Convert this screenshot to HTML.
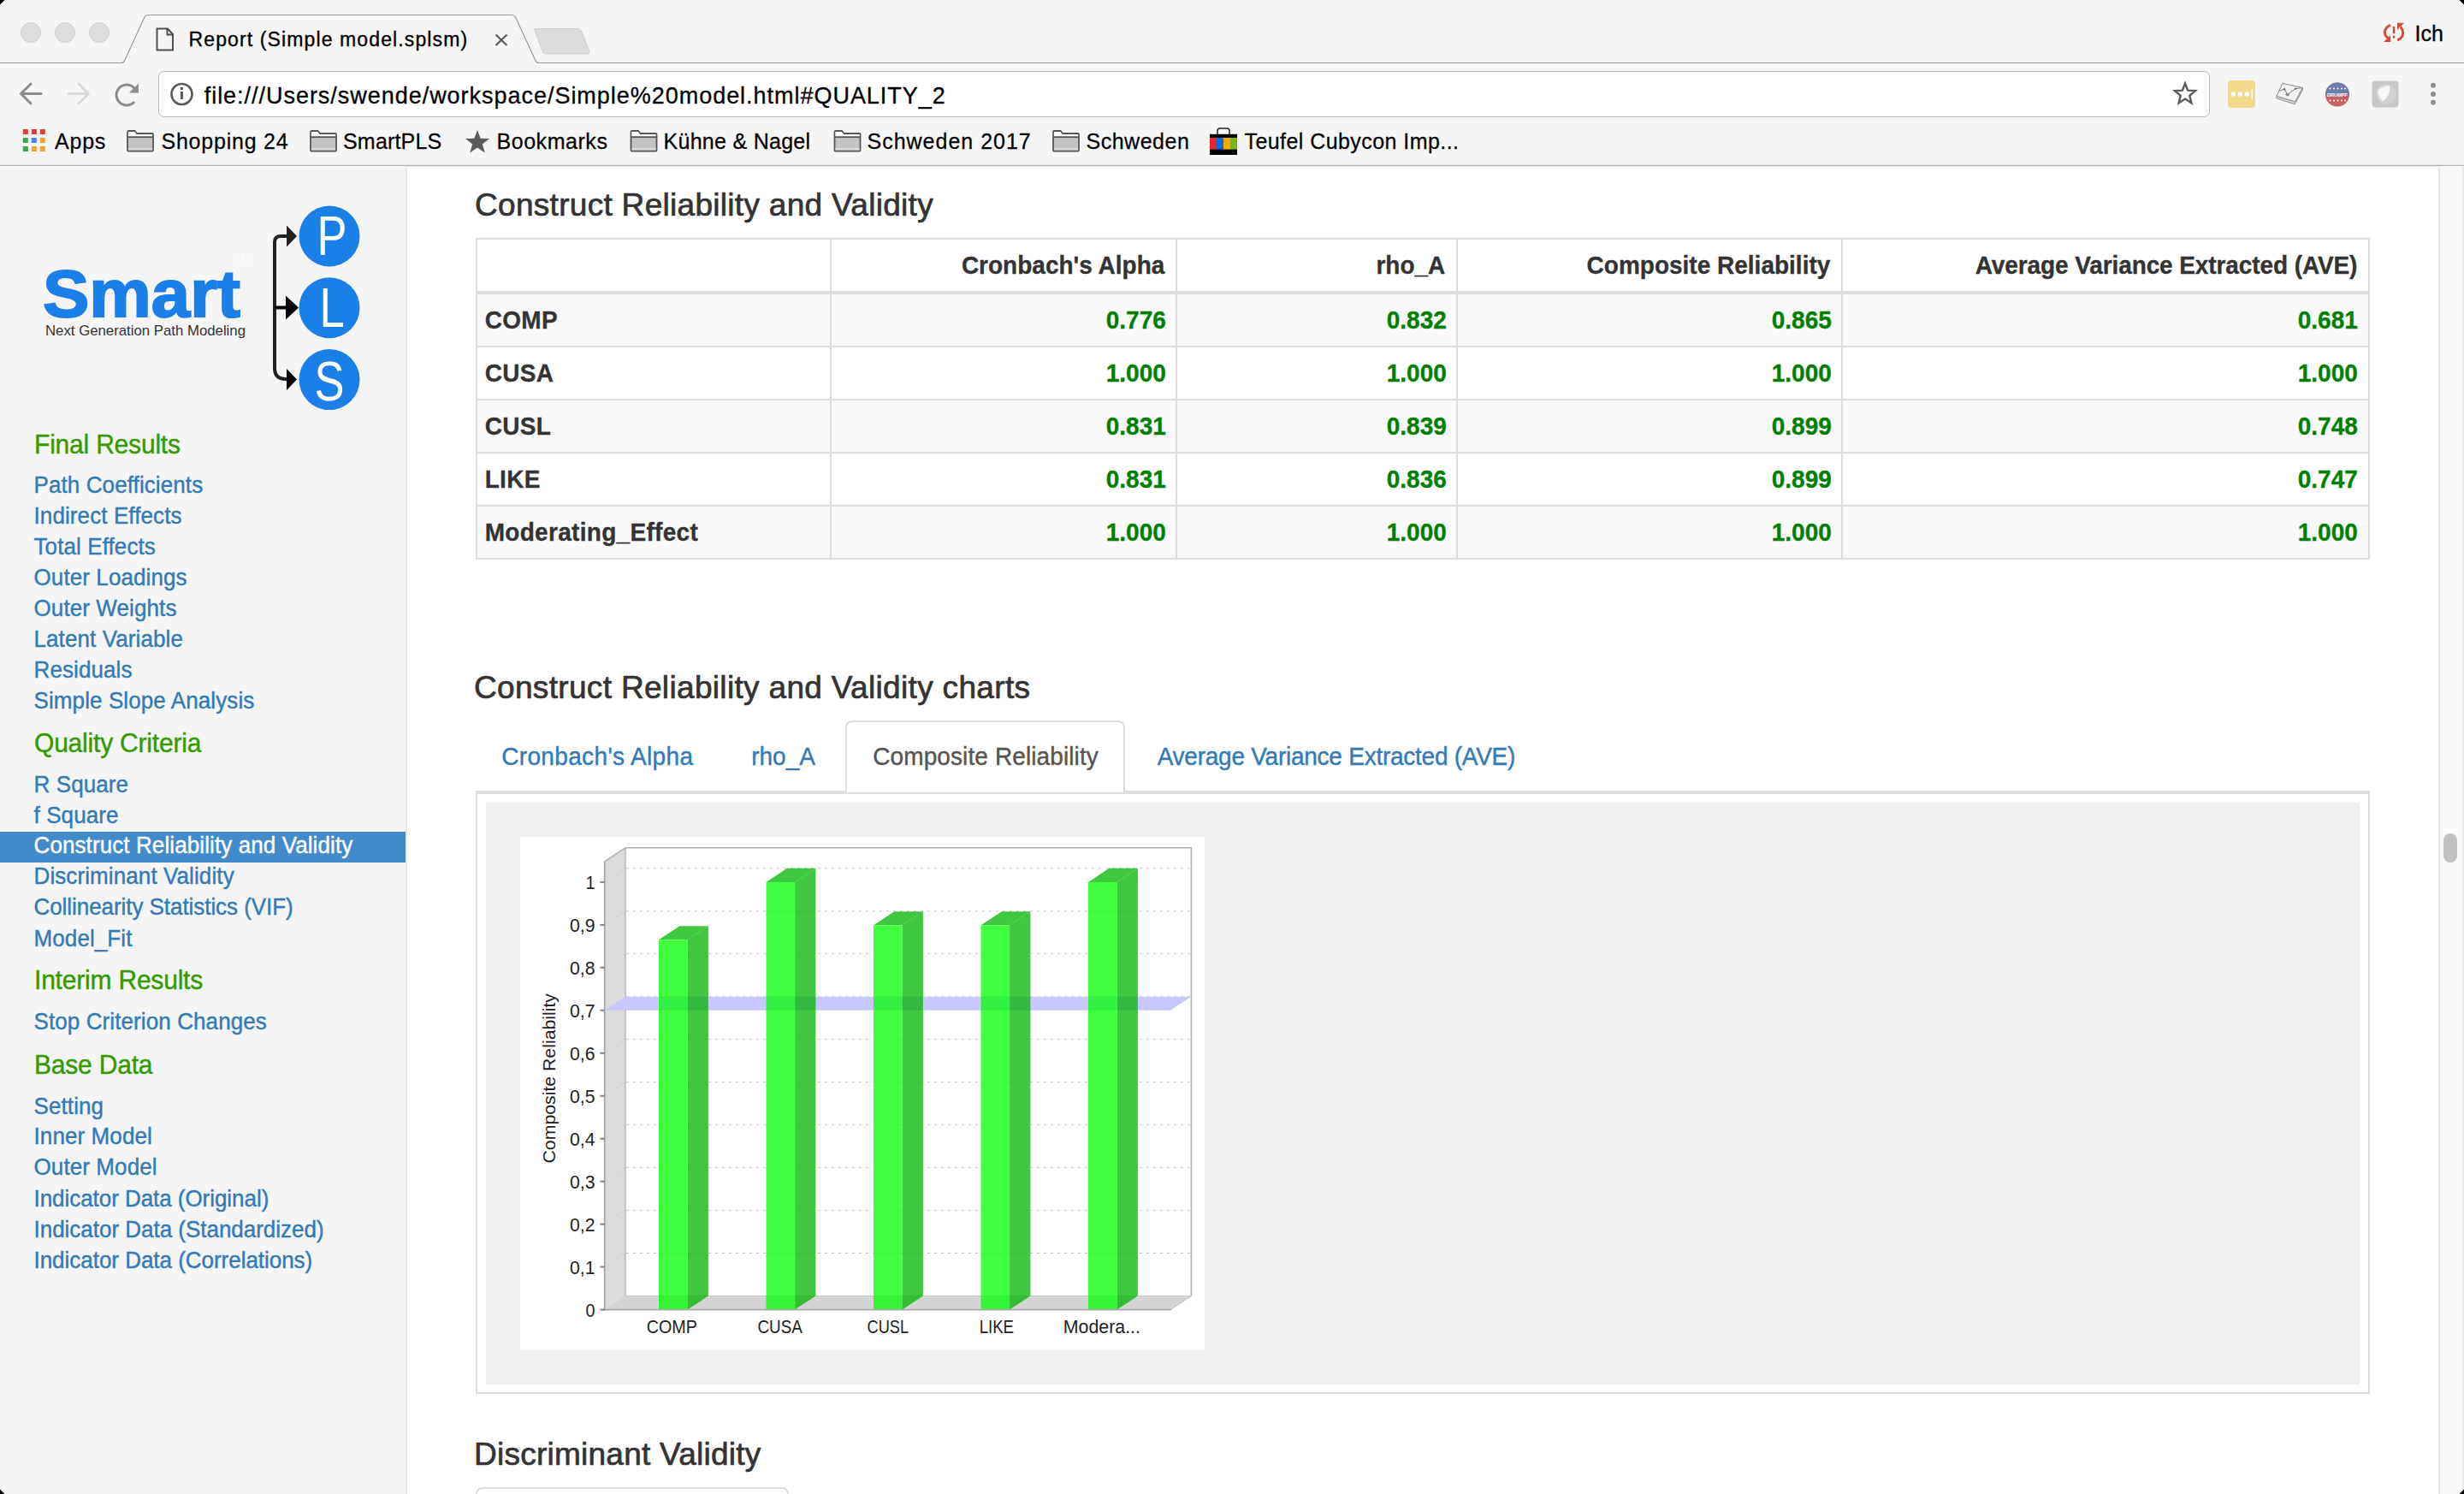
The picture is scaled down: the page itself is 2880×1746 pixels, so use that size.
<!DOCTYPE html>
<html><head><meta charset="utf-8"><title>Report</title>
<style>
html,body{margin:0;padding:0;width:2880px;height:1746px;overflow:hidden;background:#fff;position:relative;font-family:"Liberation Sans", sans-serif}
.t{position:absolute;white-space:nowrap;font-family:"Liberation Sans", sans-serif}
</style></head><body>
<div style="position:absolute;left:0;top:0;width:2880px;height:194px;background:#f5f5f5"></div>
<svg style="position:absolute;left:0;top:0" width="2880" height="200">
<path d="M0 73.5 H142 Q144.5 73.5 145.5 71 L169 20 Q170.5 17.5 173.5 17.5 H598 Q601 17.5 602.5 20 L626 71 Q627 73.5 630 73.5 H2880" fill="none" stroke="#9a9a9a" stroke-width="1.2"/>
<path d="M625 35.5 Q623 33.5 626 33.5 H675 Q678 33.5 679.5 36 L689 60 Q690 63 687 63 H638 Q635 63 634 60 Z" fill="#dcdcdc" stroke="#cfcfcf" stroke-width="1"/>
<circle cx="36" cy="38" r="11.5" fill="#dedede" stroke="#cfcfcf" stroke-width="1"/>
<circle cx="76" cy="38" r="11.5" fill="#dedede" stroke="#cfcfcf" stroke-width="1"/>
<circle cx="116" cy="38" r="11.5" fill="#dedede" stroke="#cfcfcf" stroke-width="1"/>
<!-- file icon -->
<path d="M183.5 33.5 H196 L202 40 V58.5 H183.5 Z M195.5 33.5 V40.5 H202" fill="none" stroke="#505050" stroke-width="2"/>
<!-- close x -->
<path d="M579.5 40.5 L592.5 53 M592.5 40.5 L579.5 53" stroke="#5a5a5a" stroke-width="2.2"/>
<!-- bookmarks bar bottom line -->
<line x1="0" y1="193.5" x2="2880" y2="193.5" stroke="#b4b4b4" stroke-width="1.5"/>
<!-- url bar -->
<rect x="185.5" y="83.5" width="2397" height="53" rx="6" ry="6" fill="#fff" stroke="#b9b9b9" stroke-width="1"/>
<!-- back -->
<path d="M48 109.5 H26 M36 98 L24.5 109.5 L36 121" fill="none" stroke="#8c8c8c" stroke-width="3" stroke-linecap="round" stroke-linejoin="round"/>
<!-- forward -->
<path d="M80 109.5 H103 M92 98 L103.5 109.5 L92 121" fill="none" stroke="#d9d9d9" stroke-width="3" stroke-linecap="round" stroke-linejoin="round"/>
<!-- reload -->
<path d="M158.5 105 A12 12 0 1 0 157 119" fill="none" stroke="#8c8c8c" stroke-width="3"/>
<path d="M162 97.5 V108.5 H151 Z" fill="#8c8c8c"/>
<!-- info icon -->
<circle cx="212.5" cy="110" r="12" fill="none" stroke="#5a5a5a" stroke-width="2.6"/>
<rect x="211" y="107" width="3" height="9" fill="#5a5a5a"/>
<rect x="211" y="102" width="3" height="3" fill="#5a5a5a"/>
<!-- star -->
<path d="M2554 97.5 L2557.2 105.6 L2566 106.1 L2559.3 111.8 L2561.4 120.3 L2554 115.6 L2546.6 120.3 L2548.7 111.8 L2542 106.1 L2550.8 105.6 Z" fill="none" stroke="#5a5a5a" stroke-width="2.4" stroke-linejoin="miter"/>
<!-- lastpass -->
<rect x="2604" y="94" width="32" height="32" rx="4" fill="#f3d98a"/>
<circle cx="2610.5" cy="110" r="2.7" fill="#fff"/><circle cx="2618.3" cy="110" r="2.7" fill="#fff"/><circle cx="2626.4" cy="110" r="2.7" fill="#fff"/>
<rect x="2631.5" y="104.5" width="1.5" height="11" fill="#fff"/>
<!-- map icon -->
<path d="M2661 112.5 L2667.8 97.5 L2691.5 102.5 L2682.5 119 Z" fill="#f2f2f2" stroke="#8a8a8a" stroke-width="1"/>
<path d="M2661 112.5 L2660.6 114.8 L2682.3 121.8 L2691.6 105 L2691.5 102.5 L2682.5 119 Z" fill="#d9d9d9" stroke="#8a8a8a" stroke-width="0.9"/>
<path d="M2664.5 106 L2670.1 104.2 L2673.7 110.4 L2683.1 103.6 L2689.5 102.8" fill="none" stroke="#7a7a7a" stroke-width="1"/>
<circle cx="2670.1" cy="104.2" r="1.2" fill="#6a6a6a"/><circle cx="2683.1" cy="103.6" r="1.2" fill="#6a6a6a"/>
<ellipse cx="2673.7" cy="110.6" rx="2.2" ry="1.8" fill="#8a8a8a"/>
<!-- drumpf -->
<circle cx="2732" cy="110.5" r="14" fill="#c46262"/>
<path d="M2718 110.5 A14 14 0 0 1 2746 110.5 Z" fill="#6c7ea9"/>
<text x="2732" y="112.8" font-family="Liberation Sans" font-size="6" font-weight="700" fill="#fff" text-anchor="middle" textLength="24" lengthAdjust="spacingAndGlyphs">DRUMPF</text>
<g fill="#fff"><circle cx="2723.5" cy="103.5" r="1"/><circle cx="2728" cy="103.5" r="1"/><circle cx="2732.5" cy="103.5" r="1"/><circle cx="2737" cy="103.5" r="1"/><circle cx="2741" cy="103.5" r="1"/>
<circle cx="2723.5" cy="117.5" r="1"/><circle cx="2728" cy="117.5" r="1"/><circle cx="2732.5" cy="117.5" r="1"/><circle cx="2737" cy="117.5" r="1"/><circle cx="2741" cy="117.5" r="1"/></g>
<!-- gray ext -->
<rect x="2772.5" y="94.5" width="31" height="31" rx="4" fill="#c8c8c8"/>
<circle cx="2789" cy="110" r="11.5" fill="#d3d3d3"/>
<path d="M2779.5 105 Q2786 99.5 2793 100.3 Q2795 111 2785 118.5 Q2778.5 112 2779.5 105 Z" fill="#f6f6f6"/>
<!-- menu dots -->
<circle cx="2844" cy="99.7" r="3" fill="#8e8e8e"/><circle cx="2844" cy="110" r="3" fill="#8e8e8e"/><circle cx="2844" cy="119.7" r="3" fill="#8e8e8e"/>
<!-- red sync icon -->
<path d="M2794 29.3 Q2787.3 32 2787.4 38.2 Q2787.6 42.5 2792.5 45" fill="none" stroke="#d54b3a" stroke-width="3"/>
<path d="M2786 49 L2794.2 41.2 V49 Z" fill="#d54b3a"/>
<path d="M2802.2 47 Q2809 44.2 2808.6 38.2 Q2808.4 34 2805.8 31.5" fill="none" stroke="#d54b3a" stroke-width="3"/>
<path d="M2810 26.8 L2802 35 V26.8 Z" fill="#d54b3a"/>
<rect x="2796.8" y="31" width="2.4" height="8.2" fill="#d54b3a"/><rect x="2796.8" y="41.7" width="2.4" height="3" fill="#d54b3a"/>
<!-- apps grid -->
<rect x="26.8" y="151.0" width="6" height="6" fill="#e53935"/><rect x="36.8" y="151.0" width="6" height="6" fill="#e53935"/><rect x="46.8" y="151.0" width="6" height="6" fill="#e53935"/><rect x="26.8" y="161.0" width="6" height="6" fill="#34a853"/><rect x="36.8" y="161.0" width="6" height="6" fill="#4285f4"/><rect x="46.8" y="161.0" width="6" height="6" fill="#f2a22b"/><rect x="26.8" y="171.0" width="6" height="6" fill="#34a853"/><rect x="36.8" y="171.0" width="6" height="6" fill="#f2a22b"/><rect x="46.8" y="171.0" width="6" height="6" fill="#f2a22b"/>
<path d="M149 154.5 Q149 153 150.5 153 H157.5 L160 156 H178 Q179 156 179 157.5 V175.5 Q179 176.5 178 176.5 H150 Q149 176.5 149 175.5 Z" fill="#c4c4c4" stroke="#555" stroke-width="1.8"/><path d="M149.9 154 H157.2 L159.6 157 H178.1 V159.6 H149.9 Z" fill="#fbfbfb"/><path d="M149 160.2 H179" stroke="#555" stroke-width="1.8"/><rect x="149.9" y="173" width="28.2" height="2.6" fill="#d8d8d8"/>
<path d="M363 154.5 Q363 153 364.5 153 H371.5 L374 156 H392 Q393 156 393 157.5 V175.5 Q393 176.5 392 176.5 H364 Q363 176.5 363 175.5 Z" fill="#c4c4c4" stroke="#555" stroke-width="1.8"/><path d="M363.9 154 H371.2 L373.6 157 H392.1 V159.6 H363.9 Z" fill="#fbfbfb"/><path d="M363 160.2 H393" stroke="#555" stroke-width="1.8"/><rect x="363.9" y="173" width="28.2" height="2.6" fill="#d8d8d8"/>
<path d="M737.5 154.5 Q737.5 153 739.0 153 H746.0 L748.5 156 H766.5 Q767.5 156 767.5 157.5 V175.5 Q767.5 176.5 766.5 176.5 H738.5 Q737.5 176.5 737.5 175.5 Z" fill="#c4c4c4" stroke="#555" stroke-width="1.8"/><path d="M738.4 154 H745.7 L748.1 157 H766.6 V159.6 H738.4 Z" fill="#fbfbfb"/><path d="M737.5 160.2 H767.5" stroke="#555" stroke-width="1.8"/><rect x="738.4" y="173" width="28.2" height="2.6" fill="#d8d8d8"/>
<path d="M975.5 154.5 Q975.5 153 977.0 153 H984.0 L986.5 156 H1004.5 Q1005.5 156 1005.5 157.5 V175.5 Q1005.5 176.5 1004.5 176.5 H976.5 Q975.5 176.5 975.5 175.5 Z" fill="#c4c4c4" stroke="#555" stroke-width="1.8"/><path d="M976.4 154 H983.7 L986.1 157 H1004.6 V159.6 H976.4 Z" fill="#fbfbfb"/><path d="M975.5 160.2 H1005.5" stroke="#555" stroke-width="1.8"/><rect x="976.4" y="173" width="28.2" height="2.6" fill="#d8d8d8"/>
<path d="M1231 154.5 Q1231 153 1232.5 153 H1239.5 L1242 156 H1260 Q1261 156 1261 157.5 V175.5 Q1261 176.5 1260 176.5 H1232 Q1231 176.5 1231 175.5 Z" fill="#c4c4c4" stroke="#555" stroke-width="1.8"/><path d="M1231.9 154 H1239.2 L1241.6 157 H1260.1 V159.6 H1231.9 Z" fill="#fbfbfb"/><path d="M1231 160.2 H1261" stroke="#555" stroke-width="1.8"/><rect x="1231.9" y="173" width="28.2" height="2.6" fill="#d8d8d8"/>
<path d="M558 152 L561.6 161.7 L572 162 L563.8 168.4 L566.8 178.5 L558 172.5 L549.2 178.5 L552.2 168.4 L544 162 L554.4 161.7 Z" fill="#5a5a5a"/>
<rect x="1414" y="156.8" width="32" height="24.2" fill="#000"/><rect x="1414" y="161" width="8" height="13.6" fill="#e3262d"/><rect x="1422" y="161" width="8" height="13.6" fill="#0a68d8"/><rect x="1430" y="161" width="8" height="13.6" fill="#f6aa00"/><rect x="1438" y="161" width="8" height="13.6" fill="#78b41c"/><path d="M1423 157 V153 Q1423 150 1426 150 H1434 Q1437 150 1437 153 V157" fill="none" stroke="#222" stroke-width="1.5"/>
</svg>
<div class="t " style="left:220.5px;top:34.73px;font-size:23px;line-height:23px;color:#000;font-weight:400;letter-spacing:1.12px;-webkit-text-stroke:0.35px #000;">Report (Simple model.splsm)</div>
<div class="t " style="left:238.7px;top:98.54px;font-size:27px;line-height:27px;color:#000;font-weight:400;letter-spacing:0.97px;transform:scaleY(1.05);transform-origin:0 22.86px;-webkit-text-stroke:0.3px #000;">file:///Users/swende/workspace/Simple%20model.html#QUALITY_2</div>
<div class="t " style="left:64.0px;top:153.04px;font-size:25px;line-height:25px;color:#000;font-weight:400;letter-spacing:0.795px;transform:scaleY(1.03);transform-origin:0 21.16px;-webkit-text-stroke:0.25px #000;">Apps</div>
<div class="t " style="left:188.5px;top:153.04px;font-size:25px;line-height:25px;color:#000;font-weight:400;letter-spacing:0.771px;transform:scaleY(1.03);transform-origin:0 21.16px;-webkit-text-stroke:0.25px #000;">Shopping 24</div>
<div class="t " style="left:401.0px;top:153.04px;font-size:25px;line-height:25px;color:#000;font-weight:400;letter-spacing:0.19px;transform:scaleY(1.03);transform-origin:0 21.16px;-webkit-text-stroke:0.25px #000;">SmartPLS</div>
<div class="t " style="left:580.5px;top:153.04px;font-size:25px;line-height:25px;color:#000;font-weight:400;letter-spacing:0.544px;transform:scaleY(1.03);transform-origin:0 21.16px;-webkit-text-stroke:0.25px #000;">Bookmarks</div>
<div class="t " style="left:775.5px;top:153.04px;font-size:25px;line-height:25px;color:#000;font-weight:400;letter-spacing:0.285px;transform:scaleY(1.03);transform-origin:0 21.16px;-webkit-text-stroke:0.25px #000;">Kühne &amp; Nagel</div>
<div class="t " style="left:1013.5px;top:153.04px;font-size:25px;line-height:25px;color:#000;font-weight:400;letter-spacing:0.996px;transform:scaleY(1.03);transform-origin:0 21.16px;-webkit-text-stroke:0.25px #000;">Schweden 2017</div>
<div class="t " style="left:1269.5px;top:153.04px;font-size:25px;line-height:25px;color:#000;font-weight:400;letter-spacing:0.51px;transform:scaleY(1.03);transform-origin:0 21.16px;-webkit-text-stroke:0.25px #000;">Schweden</div>
<div class="t " style="left:1454.5px;top:153.04px;font-size:25px;line-height:25px;color:#000;font-weight:400;letter-spacing:0.435px;transform:scaleY(1.03);transform-origin:0 21.16px;-webkit-text-stroke:0.25px #000;">Teufel Cubycon Imp...</div>
<div class="t " style="left:2822.5px;top:26.59px;font-size:25px;line-height:25px;color:#000;font-weight:400;letter-spacing:0px;-webkit-text-stroke:0.35px #000;">Ich</div>
<div style="position:absolute;left:0;top:194px;width:474px;height:1552px;background:#f5f5f5;border-right:2px solid #e9e9e9"></div>
<svg style="position:absolute;left:0;top:194px" width="474" height="300">
<text x="50" y="176" font-family="Liberation Sans" font-weight="700" font-size="78" fill="#1b7fe8" stroke="#1b7fe8" stroke-width="2" textLength="231" lengthAdjust="spacingAndGlyphs">Smart</text>
<text x="53" y="198" font-family="Liberation Sans" font-size="17" fill="#333" textLength="234" lengthAdjust="spacingAndGlyphs">Next Generation Path Modeling</text>
<text x="273" y="116" font-family="Liberation Sans" font-size="14" fill="#fbfbfb">TM</text>
<path d="M336 82 H328 Q321 82 321 89 V236 Q321 249 334 249 H336" fill="none" stroke="#222" stroke-width="4"/>
<path d="M321 165.5 H336" stroke="#000" stroke-width="4"/>
<path d="M335 69.5 L347 82 L335 94.5 Z" fill="#222"/>
<path d="M334 151.5 L349 165.5 L334 179.5 Z" fill="#000"/>
<path d="M335 237 L347 249.5 L335 262 Z" fill="#000"/>
<circle cx="385" cy="82" r="35.5" fill="#1b7fe8"/>
<circle cx="385" cy="165.7" r="35.5" fill="#1b7fe8"/>
<circle cx="385" cy="249.6" r="35.5" fill="#1b7fe8"/>
<text transform="translate(388 104) scale(0.82 1)" font-family="Liberation Sans" font-size="64" fill="#fff" text-anchor="middle">P</text>
<text transform="translate(388 188) scale(0.82 1)" font-family="Liberation Sans" font-size="64" fill="#fff" text-anchor="middle">L</text>
<text transform="translate(385 273.5) scale(0.82 1)" font-family="Liberation Sans" font-size="64" fill="#fff" text-anchor="middle">S</text>
</svg>
<div style="position:absolute;left:0;top:972px;width:474px;height:36px;background:#428bca"></div>
<div class="t " style="left:40.0px;top:504.61px;font-size:30px;line-height:30px;color:#339a00;font-weight:400;letter-spacing:-0.2px;transform:scaleY(1.05);transform-origin:0 25.39px;-webkit-text-stroke:0.4px #339a00;">Final Results</div>
<div class="t " style="left:39.5px;top:553.79px;font-size:26px;line-height:26px;color:#337ab7;font-weight:400;letter-spacing:0.1px;transform:scaleY(1.05);transform-origin:0 22.01px;-webkit-text-stroke:0.4px #337ab7;">Path Coefficients</div>
<div class="t " style="left:39.5px;top:589.99px;font-size:26px;line-height:26px;color:#337ab7;font-weight:400;letter-spacing:0.1px;transform:scaleY(1.05);transform-origin:0 22.01px;-webkit-text-stroke:0.4px #337ab7;">Indirect Effects</div>
<div class="t " style="left:39.5px;top:625.89px;font-size:26px;line-height:26px;color:#337ab7;font-weight:400;letter-spacing:0.1px;transform:scaleY(1.05);transform-origin:0 22.01px;-webkit-text-stroke:0.4px #337ab7;">Total Effects</div>
<div class="t " style="left:39.5px;top:661.89px;font-size:26px;line-height:26px;color:#337ab7;font-weight:400;letter-spacing:0.1px;transform:scaleY(1.05);transform-origin:0 22.01px;-webkit-text-stroke:0.4px #337ab7;">Outer Loadings</div>
<div class="t " style="left:39.5px;top:697.59px;font-size:26px;line-height:26px;color:#337ab7;font-weight:400;letter-spacing:0.1px;transform:scaleY(1.05);transform-origin:0 22.01px;-webkit-text-stroke:0.4px #337ab7;">Outer Weights</div>
<div class="t " style="left:39.5px;top:733.79px;font-size:26px;line-height:26px;color:#337ab7;font-weight:400;letter-spacing:0.1px;transform:scaleY(1.05);transform-origin:0 22.01px;-webkit-text-stroke:0.4px #337ab7;">Latent Variable</div>
<div class="t " style="left:39.5px;top:769.99px;font-size:26px;line-height:26px;color:#337ab7;font-weight:400;letter-spacing:0.1px;transform:scaleY(1.05);transform-origin:0 22.01px;-webkit-text-stroke:0.4px #337ab7;">Residuals</div>
<div class="t " style="left:39.5px;top:805.69px;font-size:26px;line-height:26px;color:#337ab7;font-weight:400;letter-spacing:0.1px;transform:scaleY(1.05);transform-origin:0 22.01px;-webkit-text-stroke:0.4px #337ab7;">Simple Slope Analysis</div>
<div class="t " style="left:40.0px;top:853.71px;font-size:30px;line-height:30px;color:#339a00;font-weight:400;letter-spacing:-0.2px;transform:scaleY(1.05);transform-origin:0 25.39px;-webkit-text-stroke:0.4px #339a00;">Quality Criteria</div>
<div class="t " style="left:39.5px;top:903.79px;font-size:26px;line-height:26px;color:#337ab7;font-weight:400;letter-spacing:0.1px;transform:scaleY(1.05);transform-origin:0 22.01px;-webkit-text-stroke:0.4px #337ab7;">R Square</div>
<div class="t " style="left:39.5px;top:939.79px;font-size:26px;line-height:26px;color:#337ab7;font-weight:400;letter-spacing:0.1px;transform:scaleY(1.05);transform-origin:0 22.01px;-webkit-text-stroke:0.4px #337ab7;">f Square</div>
<div class="t " style="left:39.5px;top:975.49px;font-size:26px;line-height:26px;color:#fff;font-weight:400;letter-spacing:0.1px;transform:scaleY(1.05);transform-origin:0 22.01px;-webkit-text-stroke:0.4px #fff;">Construct Reliability and Validity</div>
<div class="t " style="left:39.5px;top:1011.39px;font-size:26px;line-height:26px;color:#337ab7;font-weight:400;letter-spacing:0.1px;transform:scaleY(1.05);transform-origin:0 22.01px;-webkit-text-stroke:0.4px #337ab7;">Discriminant Validity</div>
<div class="t " style="left:39.5px;top:1047.39px;font-size:26px;line-height:26px;color:#337ab7;font-weight:400;letter-spacing:-0.06px;transform:scaleY(1.05);transform-origin:0 22.01px;-webkit-text-stroke:0.4px #337ab7;">Collinearity Statistics (VIF)</div>
<div class="t " style="left:39.5px;top:1083.59px;font-size:26px;line-height:26px;color:#337ab7;font-weight:400;letter-spacing:0.1px;transform:scaleY(1.05);transform-origin:0 22.01px;-webkit-text-stroke:0.4px #337ab7;">Model_Fit</div>
<div class="t " style="left:40.0px;top:1131.40px;font-size:30px;line-height:30px;color:#339a00;font-weight:400;letter-spacing:-0.2px;transform:scaleY(1.05);transform-origin:0 25.39px;-webkit-text-stroke:0.4px #339a00;">Interim Results</div>
<div class="t " style="left:39.5px;top:1181.19px;font-size:26px;line-height:26px;color:#337ab7;font-weight:400;letter-spacing:0.1px;transform:scaleY(1.05);transform-origin:0 22.01px;-webkit-text-stroke:0.4px #337ab7;">Stop Criterion Changes</div>
<div class="t " style="left:40.0px;top:1229.70px;font-size:30px;line-height:30px;color:#339a00;font-weight:400;letter-spacing:-0.2px;transform:scaleY(1.05);transform-origin:0 25.39px;-webkit-text-stroke:0.4px #339a00;">Base Data</div>
<div class="t " style="left:39.5px;top:1279.59px;font-size:26px;line-height:26px;color:#337ab7;font-weight:400;letter-spacing:0.1px;transform:scaleY(1.05);transform-origin:0 22.01px;-webkit-text-stroke:0.4px #337ab7;">Setting</div>
<div class="t " style="left:39.5px;top:1315.49px;font-size:26px;line-height:26px;color:#337ab7;font-weight:400;letter-spacing:0.1px;transform:scaleY(1.05);transform-origin:0 22.01px;-webkit-text-stroke:0.4px #337ab7;">Inner Model</div>
<div class="t " style="left:39.5px;top:1351.49px;font-size:26px;line-height:26px;color:#337ab7;font-weight:400;letter-spacing:0.1px;transform:scaleY(1.05);transform-origin:0 22.01px;-webkit-text-stroke:0.4px #337ab7;">Outer Model</div>
<div class="t " style="left:39.5px;top:1387.89px;font-size:26px;line-height:26px;color:#337ab7;font-weight:400;letter-spacing:-0.05px;transform:scaleY(1.05);transform-origin:0 22.01px;-webkit-text-stroke:0.4px #337ab7;">Indicator Data (Original)</div>
<div class="t " style="left:39.5px;top:1423.59px;font-size:26px;line-height:26px;color:#337ab7;font-weight:400;letter-spacing:-0.02px;transform:scaleY(1.05);transform-origin:0 22.01px;-webkit-text-stroke:0.4px #337ab7;">Indicator Data (Standardized)</div>
<div class="t " style="left:39.5px;top:1459.59px;font-size:26px;line-height:26px;color:#337ab7;font-weight:400;letter-spacing:-0.03px;transform:scaleY(1.05);transform-origin:0 22.01px;-webkit-text-stroke:0.4px #337ab7;">Indicator Data (Correlations)</div>
<div style="position:absolute;left:2850px;top:194px;width:30px;height:1552px;background:#fafafa;border-left:2px solid #e8e8e8;box-sizing:border-box"></div>
<div style="position:absolute;left:2878px;top:194px;width:2px;height:1552px;background:#ececec"></div><div style="position:absolute;left:2856px;top:974px;width:16px;height:34px;border-radius:8px;background:#c1c1c1"></div>
<div class="t " style="left:555.0px;top:220.98px;font-size:37px;line-height:37px;color:#333;font-weight:400;letter-spacing:0.3px;-webkit-text-stroke:0.7px #333;">Construct Reliability and Validity</div>
<svg style="position:absolute;left:0;top:0" width="2880" height="700"><rect x="557" y="340" width="2211" height="64" fill="#f9f9f9"/><rect x="557" y="466" width="2211" height="62" fill="#f9f9f9"/><rect x="557" y="590" width="2211" height="62" fill="#f9f9f9"/><rect x="556" y="278" width="2214" height="2" fill="#dddddd"/><rect x="556" y="340" width="2214" height="4" fill="#dddddd"/><rect x="556" y="404" width="2214" height="2" fill="#dddddd"/><rect x="556" y="466" width="2214" height="2" fill="#dddddd"/><rect x="556" y="528" width="2214" height="2" fill="#dddddd"/><rect x="556" y="590" width="2214" height="2" fill="#dddddd"/><rect x="556" y="652" width="2214" height="2" fill="#dddddd"/><rect x="556" y="278" width="2" height="376" fill="#dddddd"/><rect x="970" y="278" width="2" height="376" fill="#dddddd"/><rect x="1374" y="278" width="2" height="376" fill="#dddddd"/><rect x="1702" y="278" width="2" height="376" fill="#dddddd"/><rect x="2152" y="278" width="2" height="376" fill="#dddddd"/><rect x="2768" y="278" width="2" height="376" fill="#dddddd"/></svg>
<div class="t" style="right:1518.7px;top:296.50px;font-size:28px;line-height:28px;color:#333;font-weight:700;letter-spacing:0px;text-align:right;transform:scaleY(1.05);transform-origin:0 23.70px;-webkit-text-stroke:0.3px #333;">Cronbach's Alpha</div>
<div class="t" style="right:1190.7px;top:296.50px;font-size:28px;line-height:28px;color:#333;font-weight:700;letter-spacing:0px;text-align:right;transform:scaleY(1.05);transform-origin:0 23.70px;-webkit-text-stroke:0.3px #333;">rho_A</div>
<div class="t" style="right:740.7px;top:296.50px;font-size:28px;line-height:28px;color:#333;font-weight:700;letter-spacing:0px;text-align:right;transform:scaleY(1.05);transform-origin:0 23.70px;-webkit-text-stroke:0.3px #333;">Composite Reliability</div>
<div class="t" style="right:124.7px;top:296.50px;font-size:28px;line-height:28px;color:#333;font-weight:700;letter-spacing:-0.1px;text-align:right;transform:scaleY(1.05);transform-origin:0 23.70px;-webkit-text-stroke:0.3px #333;">Average Variance Extracted (AVE)</div>
<div class="t " style="left:566.7px;top:360.60px;font-size:28px;line-height:28px;color:#333;font-weight:700;letter-spacing:0.3px;transform:scaleY(1.05);transform-origin:0 23.70px;-webkit-text-stroke:0.3px #333;">COMP</div>
<div class="t" style="right:1517.2px;top:360.60px;font-size:28px;line-height:28px;color:#008000;font-weight:700;letter-spacing:0px;text-align:right;transform:scaleY(1.05);transform-origin:0 23.70px;-webkit-text-stroke:0.3px #008000;">0.776</div>
<div class="t" style="right:1189.2px;top:360.60px;font-size:28px;line-height:28px;color:#008000;font-weight:700;letter-spacing:0px;text-align:right;transform:scaleY(1.05);transform-origin:0 23.70px;-webkit-text-stroke:0.3px #008000;">0.832</div>
<div class="t" style="right:739.2px;top:360.60px;font-size:28px;line-height:28px;color:#008000;font-weight:700;letter-spacing:0px;text-align:right;transform:scaleY(1.05);transform-origin:0 23.70px;-webkit-text-stroke:0.3px #008000;">0.865</div>
<div class="t" style="right:124.2px;top:360.60px;font-size:28px;line-height:28px;color:#008000;font-weight:700;letter-spacing:0px;text-align:right;transform:scaleY(1.05);transform-origin:0 23.70px;-webkit-text-stroke:0.3px #008000;">0.681</div>
<div class="t " style="left:566.7px;top:422.60px;font-size:28px;line-height:28px;color:#333;font-weight:700;letter-spacing:0.3px;transform:scaleY(1.05);transform-origin:0 23.70px;-webkit-text-stroke:0.3px #333;">CUSA</div>
<div class="t" style="right:1517.2px;top:422.60px;font-size:28px;line-height:28px;color:#008000;font-weight:700;letter-spacing:0px;text-align:right;transform:scaleY(1.05);transform-origin:0 23.70px;-webkit-text-stroke:0.3px #008000;">1.000</div>
<div class="t" style="right:1189.2px;top:422.60px;font-size:28px;line-height:28px;color:#008000;font-weight:700;letter-spacing:0px;text-align:right;transform:scaleY(1.05);transform-origin:0 23.70px;-webkit-text-stroke:0.3px #008000;">1.000</div>
<div class="t" style="right:739.2px;top:422.60px;font-size:28px;line-height:28px;color:#008000;font-weight:700;letter-spacing:0px;text-align:right;transform:scaleY(1.05);transform-origin:0 23.70px;-webkit-text-stroke:0.3px #008000;">1.000</div>
<div class="t" style="right:124.2px;top:422.60px;font-size:28px;line-height:28px;color:#008000;font-weight:700;letter-spacing:0px;text-align:right;transform:scaleY(1.05);transform-origin:0 23.70px;-webkit-text-stroke:0.3px #008000;">1.000</div>
<div class="t " style="left:566.7px;top:484.60px;font-size:28px;line-height:28px;color:#333;font-weight:700;letter-spacing:0.3px;transform:scaleY(1.05);transform-origin:0 23.70px;-webkit-text-stroke:0.3px #333;">CUSL</div>
<div class="t" style="right:1517.2px;top:484.60px;font-size:28px;line-height:28px;color:#008000;font-weight:700;letter-spacing:0px;text-align:right;transform:scaleY(1.05);transform-origin:0 23.70px;-webkit-text-stroke:0.3px #008000;">0.831</div>
<div class="t" style="right:1189.2px;top:484.60px;font-size:28px;line-height:28px;color:#008000;font-weight:700;letter-spacing:0px;text-align:right;transform:scaleY(1.05);transform-origin:0 23.70px;-webkit-text-stroke:0.3px #008000;">0.839</div>
<div class="t" style="right:739.2px;top:484.60px;font-size:28px;line-height:28px;color:#008000;font-weight:700;letter-spacing:0px;text-align:right;transform:scaleY(1.05);transform-origin:0 23.70px;-webkit-text-stroke:0.3px #008000;">0.899</div>
<div class="t" style="right:124.2px;top:484.60px;font-size:28px;line-height:28px;color:#008000;font-weight:700;letter-spacing:0px;text-align:right;transform:scaleY(1.05);transform-origin:0 23.70px;-webkit-text-stroke:0.3px #008000;">0.748</div>
<div class="t " style="left:566.7px;top:546.60px;font-size:28px;line-height:28px;color:#333;font-weight:700;letter-spacing:0.3px;transform:scaleY(1.05);transform-origin:0 23.70px;-webkit-text-stroke:0.3px #333;">LIKE</div>
<div class="t" style="right:1517.2px;top:546.60px;font-size:28px;line-height:28px;color:#008000;font-weight:700;letter-spacing:0px;text-align:right;transform:scaleY(1.05);transform-origin:0 23.70px;-webkit-text-stroke:0.3px #008000;">0.831</div>
<div class="t" style="right:1189.2px;top:546.60px;font-size:28px;line-height:28px;color:#008000;font-weight:700;letter-spacing:0px;text-align:right;transform:scaleY(1.05);transform-origin:0 23.70px;-webkit-text-stroke:0.3px #008000;">0.836</div>
<div class="t" style="right:739.2px;top:546.60px;font-size:28px;line-height:28px;color:#008000;font-weight:700;letter-spacing:0px;text-align:right;transform:scaleY(1.05);transform-origin:0 23.70px;-webkit-text-stroke:0.3px #008000;">0.899</div>
<div class="t" style="right:124.2px;top:546.60px;font-size:28px;line-height:28px;color:#008000;font-weight:700;letter-spacing:0px;text-align:right;transform:scaleY(1.05);transform-origin:0 23.70px;-webkit-text-stroke:0.3px #008000;">0.747</div>
<div class="t " style="left:566.7px;top:608.60px;font-size:28px;line-height:28px;color:#333;font-weight:700;letter-spacing:0.3px;transform:scaleY(1.05);transform-origin:0 23.70px;-webkit-text-stroke:0.3px #333;">Moderating_Effect</div>
<div class="t" style="right:1517.2px;top:608.60px;font-size:28px;line-height:28px;color:#008000;font-weight:700;letter-spacing:0px;text-align:right;transform:scaleY(1.05);transform-origin:0 23.70px;-webkit-text-stroke:0.3px #008000;">1.000</div>
<div class="t" style="right:1189.2px;top:608.60px;font-size:28px;line-height:28px;color:#008000;font-weight:700;letter-spacing:0px;text-align:right;transform:scaleY(1.05);transform-origin:0 23.70px;-webkit-text-stroke:0.3px #008000;">1.000</div>
<div class="t" style="right:739.2px;top:608.60px;font-size:28px;line-height:28px;color:#008000;font-weight:700;letter-spacing:0px;text-align:right;transform:scaleY(1.05);transform-origin:0 23.70px;-webkit-text-stroke:0.3px #008000;">1.000</div>
<div class="t" style="right:124.2px;top:608.60px;font-size:28px;line-height:28px;color:#008000;font-weight:700;letter-spacing:0px;text-align:right;transform:scaleY(1.05);transform-origin:0 23.70px;-webkit-text-stroke:0.3px #008000;">1.000</div>
<div class="t " style="left:554.0px;top:784.88px;font-size:37px;line-height:37px;color:#333;font-weight:400;letter-spacing:0.33px;-webkit-text-stroke:0.7px #333;">Construct Reliability and Validity charts</div>
<div style="position:absolute;left:988px;top:842px;width:327px;height:86px;background:#fff;border:2px solid #ddd;border-bottom:none;border-radius:8px 8px 0 0;box-sizing:border-box"></div>
<div style="position:absolute;left:556px;top:926px;width:2214px;height:703px;border:2px solid #ddd;box-sizing:border-box"></div>
<div style="position:absolute;left:556px;top:924px;width:2214px;height:2px;background:#ddd"></div>
<div style="position:absolute;left:990px;top:922px;width:323px;height:4px;background:#fff"></div>
<div class="t " style="left:586.2px;top:870.80px;font-size:28px;line-height:28px;color:#337ab7;font-weight:400;letter-spacing:0.35px;transform:scaleY(1.06);transform-origin:0 23.70px;-webkit-text-stroke:0.4px #337ab7;">Cronbach's Alpha</div>
<div class="t " style="left:878.2px;top:870.80px;font-size:28px;line-height:28px;color:#337ab7;font-weight:400;letter-spacing:0px;transform:scaleY(1.06);transform-origin:0 23.70px;-webkit-text-stroke:0.4px #337ab7;">rho_A</div>
<div class="t " style="left:1020.2px;top:870.80px;font-size:28px;line-height:28px;color:#555;font-weight:400;letter-spacing:0.11px;transform:scaleY(1.06);transform-origin:0 23.70px;-webkit-text-stroke:0.4px #555;">Composite Reliability</div>
<div class="t " style="left:1352.7px;top:870.80px;font-size:28px;line-height:28px;color:#337ab7;font-weight:400;letter-spacing:-0.25px;transform:scaleY(1.06);transform-origin:0 23.70px;-webkit-text-stroke:0.4px #337ab7;">Average Variance Extracted (AVE)</div>
<div style="position:absolute;left:568px;top:938px;width:2190px;height:680px;background:#efefef"></div>
<div style="position:absolute;left:608px;top:978px;width:800px;height:600px;background:#fff"></div>
<div class="t " style="left:554.0px;top:1680.68px;font-size:37px;line-height:37px;color:#333;font-weight:400;letter-spacing:0.25px;-webkit-text-stroke:0.7px #333;">Discriminant Validity</div>
<div style="position:absolute;left:556px;top:1738px;width:366px;height:20px;border:2px solid #ddd;border-radius:8px 8px 0 0;box-sizing:border-box"></div>
<svg style="position:absolute;left:0;top:0" width="2880" height="1746"><path d="M0 0 H5.5 L0 5.5 Z" fill="#000"/><path d="M2880 0 H2874.5 L2880 5.5 Z" fill="#000"/><path d="M0 1746 H5.5 L0 1740.5 Z" fill="#000"/><path d="M2880 1746 H2874.5 L2880 1740.5 Z" fill="#000"/></svg>
<svg style="position:absolute;left:0;top:0" width="2880" height="1746" viewBox="0 0 2880 1746"><polygon points="706.7,1006.8999999999999 731.0,990.8 731.0,1514.5 706.7,1530.6" fill="#dcdcdc"/><polygon points="706.7,1530.6 731.0,1514.5 1393.4,1514.5 1369.1000000000001,1530.6" fill="#d4d4d4"/><line x1="732.0" y1="1464.5" x2="1391.4" y2="1464.5" stroke="#c8c8c8" stroke-width="1" stroke-dasharray="3 5"/><line x1="706.7" y1="1480.6" x2="731.0" y2="1464.5" stroke="#cfcfcf" stroke-width="1" stroke-dasharray="4 4"/><line x1="732.0" y1="1414.6" x2="1391.4" y2="1414.6" stroke="#c8c8c8" stroke-width="1" stroke-dasharray="3 5"/><line x1="706.7" y1="1430.7" x2="731.0" y2="1414.6" stroke="#cfcfcf" stroke-width="1" stroke-dasharray="4 4"/><line x1="732.0" y1="1364.6" x2="1391.4" y2="1364.6" stroke="#c8c8c8" stroke-width="1" stroke-dasharray="3 5"/><line x1="706.7" y1="1380.7" x2="731.0" y2="1364.6" stroke="#cfcfcf" stroke-width="1" stroke-dasharray="4 4"/><line x1="732.0" y1="1314.6" x2="1391.4" y2="1314.6" stroke="#c8c8c8" stroke-width="1" stroke-dasharray="3 5"/><line x1="706.7" y1="1330.7" x2="731.0" y2="1314.6" stroke="#cfcfcf" stroke-width="1" stroke-dasharray="4 4"/><line x1="732.0" y1="1264.7" x2="1391.4" y2="1264.7" stroke="#c8c8c8" stroke-width="1" stroke-dasharray="3 5"/><line x1="706.7" y1="1280.8" x2="731.0" y2="1264.7" stroke="#cfcfcf" stroke-width="1" stroke-dasharray="4 4"/><line x1="732.0" y1="1214.7" x2="1391.4" y2="1214.7" stroke="#c8c8c8" stroke-width="1" stroke-dasharray="3 5"/><line x1="706.7" y1="1230.8" x2="731.0" y2="1214.7" stroke="#cfcfcf" stroke-width="1" stroke-dasharray="4 4"/><line x1="732.0" y1="1164.7" x2="1391.4" y2="1164.7" stroke="#c8c8c8" stroke-width="1" stroke-dasharray="3 5"/><line x1="706.7" y1="1180.8" x2="731.0" y2="1164.7" stroke="#cfcfcf" stroke-width="1" stroke-dasharray="4 4"/><line x1="732.0" y1="1114.7" x2="1391.4" y2="1114.7" stroke="#c8c8c8" stroke-width="1" stroke-dasharray="3 5"/><line x1="706.7" y1="1130.8" x2="731.0" y2="1114.7" stroke="#cfcfcf" stroke-width="1" stroke-dasharray="4 4"/><line x1="732.0" y1="1064.8" x2="1391.4" y2="1064.8" stroke="#c8c8c8" stroke-width="1" stroke-dasharray="3 5"/><line x1="706.7" y1="1080.9" x2="731.0" y2="1064.8" stroke="#cfcfcf" stroke-width="1" stroke-dasharray="4 4"/><line x1="732.0" y1="1014.8" x2="1391.4" y2="1014.8" stroke="#c8c8c8" stroke-width="1" stroke-dasharray="3 5"/><line x1="706.7" y1="1030.9" x2="731.0" y2="1014.8" stroke="#cfcfcf" stroke-width="1" stroke-dasharray="4 4"/><path d="M706.7 1006.8999999999999 L731.0 990.8 H1392.4 V1514.5" fill="none" stroke="#b0b0b0" stroke-width="1.6"/><line x1="731.0" y1="990.8" x2="731.0" y2="1514.5" stroke="#b4b4b4" stroke-width="1.4"/><line x1="731.0" y1="1514.5" x2="1392.4" y2="1514.5" stroke="#c8c8c8" stroke-width="1"/><line x1="1392.4" y1="1514.5" x2="1368.1000000000001" y2="1530.6" stroke="#c0c0c0" stroke-width="1"/><polygon points="706.7,1180.81 731.0,1164.71 1392.4,1164.71 1368.1000000000001,1180.81" fill="#c8c8ff"/><g fill-opacity="0.75"><polygon points="803.6,1098.3595 827.9,1082.2595000000001 827.9,1514.5 803.6,1530.6" fill="#00b400"/><polygon points="770.0,1098.3595 794.3,1082.2595000000001 827.9,1082.2595000000001 803.6,1098.3595" fill="#00b400"/><rect x="770.0" y="1098.3595" width="33.6" height="432.2404999999999" fill="#00ff00"/></g><g fill-opacity="0.75"><polygon points="929.1,1030.8999999999999 953.4,1014.8 953.4,1514.5 929.1,1530.6" fill="#00b400"/><polygon points="895.5,1030.8999999999999 919.8,1014.8 953.4,1014.8 929.1,1030.8999999999999" fill="#00b400"/><rect x="895.5" y="1030.8999999999999" width="33.6" height="499.70000000000005" fill="#00ff00"/></g><g fill-opacity="0.75"><polygon points="1054.6,1081.3697 1078.8999999999999,1065.2697 1078.8999999999999,1514.5 1054.6,1530.6" fill="#00b400"/><polygon points="1021.0,1081.3697 1045.3,1065.2697 1078.8999999999999,1065.2697 1054.6,1081.3697" fill="#00b400"/><rect x="1021.0" y="1081.3697" width="33.6" height="449.23029999999994" fill="#00ff00"/></g><g fill-opacity="0.75"><polygon points="1180.1,1081.3697 1204.3999999999999,1065.2697 1204.3999999999999,1514.5 1180.1,1530.6" fill="#00b400"/><polygon points="1146.5,1081.3697 1170.8,1065.2697 1204.3999999999999,1065.2697 1180.1,1081.3697" fill="#00b400"/><rect x="1146.5" y="1081.3697" width="33.6" height="449.23029999999994" fill="#00ff00"/></g><g fill-opacity="0.75"><polygon points="1305.6,1030.8999999999999 1329.8999999999999,1014.8 1329.8999999999999,1514.5 1305.6,1530.6" fill="#00b400"/><polygon points="1272.0,1030.8999999999999 1296.3,1014.8 1329.8999999999999,1014.8 1305.6,1030.8999999999999" fill="#00b400"/><rect x="1272.0" y="1030.8999999999999" width="33.6" height="499.70000000000005" fill="#00ff00"/></g><line x1="706.7" y1="1006.8999999999999" x2="706.7" y2="1531.6" stroke="#a0a0a0" stroke-width="1.6"/><line x1="706.7" y1="1530.6" x2="1369.1000000000001" y2="1530.6" stroke="#a8a8a8" stroke-width="1.8"/><line x1="701.5" y1="1530.6" x2="706.7" y2="1530.6" stroke="#808080" stroke-width="2"/><text x="684.5" y="1538.6" font-family="Liberation Sans" font-size="22.5" fill="#222" textLength="11" lengthAdjust="spacingAndGlyphs">0</text><line x1="701.5" y1="1480.6" x2="706.7" y2="1480.6" stroke="#808080" stroke-width="2"/><text x="666" y="1488.6" font-family="Liberation Sans" font-size="22.5" fill="#222" textLength="29.5" lengthAdjust="spacingAndGlyphs">0,1</text><line x1="701.5" y1="1430.7" x2="706.7" y2="1430.7" stroke="#808080" stroke-width="2"/><text x="666" y="1438.7" font-family="Liberation Sans" font-size="22.5" fill="#222" textLength="29.5" lengthAdjust="spacingAndGlyphs">0,2</text><line x1="701.5" y1="1380.7" x2="706.7" y2="1380.7" stroke="#808080" stroke-width="2"/><text x="666" y="1388.7" font-family="Liberation Sans" font-size="22.5" fill="#222" textLength="29.5" lengthAdjust="spacingAndGlyphs">0,3</text><line x1="701.5" y1="1330.7" x2="706.7" y2="1330.7" stroke="#808080" stroke-width="2"/><text x="666" y="1338.7" font-family="Liberation Sans" font-size="22.5" fill="#222" textLength="29.5" lengthAdjust="spacingAndGlyphs">0,4</text><line x1="701.5" y1="1280.8" x2="706.7" y2="1280.8" stroke="#808080" stroke-width="2"/><text x="666" y="1288.8" font-family="Liberation Sans" font-size="22.5" fill="#222" textLength="29.5" lengthAdjust="spacingAndGlyphs">0,5</text><line x1="701.5" y1="1230.8" x2="706.7" y2="1230.8" stroke="#808080" stroke-width="2"/><text x="666" y="1238.8" font-family="Liberation Sans" font-size="22.5" fill="#222" textLength="29.5" lengthAdjust="spacingAndGlyphs">0,6</text><line x1="701.5" y1="1180.8" x2="706.7" y2="1180.8" stroke="#808080" stroke-width="2"/><text x="666" y="1188.8" font-family="Liberation Sans" font-size="22.5" fill="#222" textLength="29.5" lengthAdjust="spacingAndGlyphs">0,7</text><line x1="701.5" y1="1130.8" x2="706.7" y2="1130.8" stroke="#808080" stroke-width="2"/><text x="666" y="1138.8" font-family="Liberation Sans" font-size="22.5" fill="#222" textLength="29.5" lengthAdjust="spacingAndGlyphs">0,8</text><line x1="701.5" y1="1080.9" x2="706.7" y2="1080.9" stroke="#808080" stroke-width="2"/><text x="666" y="1088.9" font-family="Liberation Sans" font-size="22.5" fill="#222" textLength="29.5" lengthAdjust="spacingAndGlyphs">0,9</text><line x1="701.5" y1="1030.9" x2="706.7" y2="1030.9" stroke="#808080" stroke-width="2"/><text x="684.5" y="1038.9" font-family="Liberation Sans" font-size="22.5" fill="#222" textLength="11" lengthAdjust="spacingAndGlyphs">1</text><text x="755.8" y="1558.2" font-family="Liberation Sans" font-size="22.5" fill="#222" textLength="59.1" lengthAdjust="spacingAndGlyphs">COMP</text><text x="885.5" y="1558.2" font-family="Liberation Sans" font-size="22.5" fill="#222" textLength="52.4" lengthAdjust="spacingAndGlyphs">CUSA</text><text x="1013.6" y="1558.2" font-family="Liberation Sans" font-size="22.5" fill="#222" textLength="48.5" lengthAdjust="spacingAndGlyphs">CUSL</text><text x="1144.7" y="1558.2" font-family="Liberation Sans" font-size="22.5" fill="#222" textLength="40.3" lengthAdjust="spacingAndGlyphs">LIKE</text><text x="1242.7" y="1558.2" font-family="Liberation Sans" font-size="22.5" fill="#222" textLength="90.3" lengthAdjust="spacingAndGlyphs">Modera...</text><text transform="translate(648.5 1359.5) rotate(-90)" font-family="Liberation Sans" font-size="20.5" fill="#222" textLength="198.5" lengthAdjust="spacingAndGlyphs">Composite Reliability</text></svg>

</body></html>
